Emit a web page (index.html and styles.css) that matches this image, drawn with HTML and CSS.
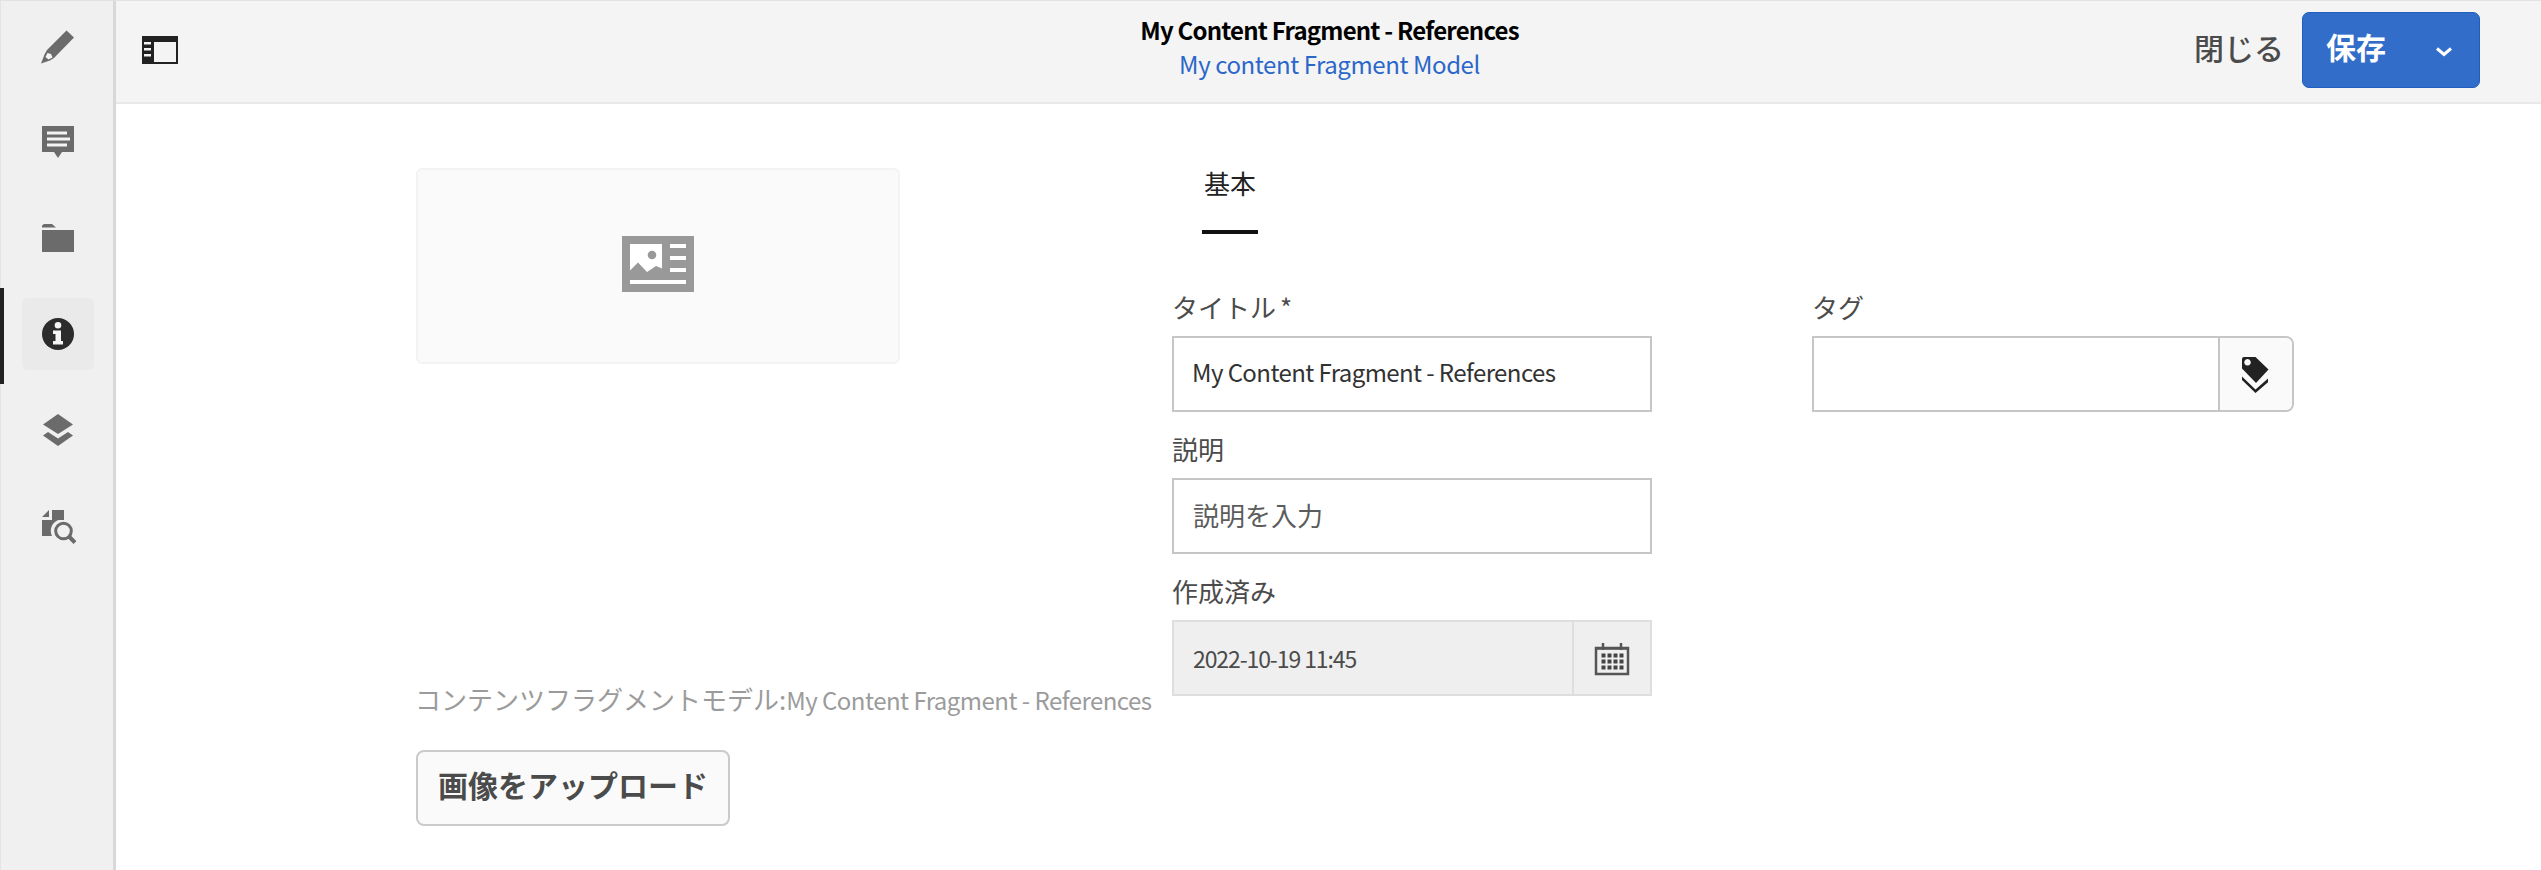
FILE: index.html
```html
<!DOCTYPE html>
<html lang="ja">
<head>
<meta charset="utf-8">
<title>My Content Fragment - References</title>
<link rel="stylesheet" href="styles.css">
</head>
<body>
<div class="app">
  <nav class="rail">
    <a class="rail-item"><svg width="36" height="36" viewBox="0 0 36 36"><path d="M26.5 1.500 34 8.500 14 29 10 31.500 1 34.500 4.500 25.500 7 21z"/><path class="cut" d="M7.500 24 11 25 12.500 28.500 8.500 30.500 5.500 28z"/></svg></a>
    <a class="rail-item"><svg width="36" height="36" viewBox="0 0 36 36"><path d="M2 2h32v26H22l-4 6-4-6H2z"/><path class="cut" d="M7 7.500h20v3H7zM7 13.500h23v3H7zM7 19.500h20v3H7z"/></svg></a>
    <a class="rail-item"><svg width="36" height="36" viewBox="0 0 36 36"><path d="M2 7.500V5.500L4 4h8l4 3.500zM2 10h32v22H2z"/></svg></a>
    <a class="rail-item active"><svg width="36" height="36" viewBox="0 0 36 36"><circle cx="18" cy="18" r="16"/><path class="cut" d="M13 14.500h8V25h2v3.500H13V25h2.500v-7H13z"/><circle class="cut" cx="18" cy="9.300" r="3.300"/></svg></a>
    <a class="rail-item"><svg width="36" height="36" viewBox="0 0 36 36"><path d="M18 2 33 12.500 18 22 3 12.500zM8 20l10 6.500L28 20l5 3.500L18 34 3 23.500z"/></svg></a>
    <a class="rail-item"><svg width="36" height="36" viewBox="0 0 36 36"><path d="M2 9 9 2v7zM12 2h12v10h-5.500A11.500 11.500 0 0 0 12 28H2V12h10z"/><circle class="lens" cx="23.500" cy="23" r="7.800"/><path class="handle" d="m29 28.500 6 6"/></svg></a>
  </nav>
  <div class="page">
    <header class="header">
      <svg class="panel-icon" width="36" height="28" viewBox="0 0 36 28"><path d="M0 0h36v28H0z"/><path class="hole" d="M12 6h22v20H12zM2 6h7v2.500H2zM2 12h7v2.500H2zM2 18h7v2.500H2z"/></svg>
      <div class="heading">
        <div class="title">My Content Fragment - References</div>
        <a class="model">My content Fragment Model</a>
      </div>
      <div class="actions">
        <span class="close">閉じる</span>
        <button class="save"><span>保存</span><svg width="18" height="12" viewBox="0 0 18 12"><path d="m2 2.500 7 6 7-6"/></svg></button>
      </div>
    </header>
    <main class="content">
      <section class="preview">
        <div class="thumb">
          <svg width="72" height="56" viewBox="0 0 72 56"><path class="gray" d="M0 0h72v56H0z"/><path class="light" d="M8 8h32v24.500L34 30l-9 6-9-9.500L8 34.500zM48 8h16v4H48zM48 20h16v4H48zM48 32h16v4H48zM8 44h56v4H8z"/><circle class="gray" cx="30" cy="19" r="4.300"/></svg>
        </div>
        <div class="caption">コンテンツフラグメントモデル:<span>My Content Fragment - References</span></div>
        <button class="upload">画像をアップロード</button>
      </section>
      <section class="form">
        <div class="tab">基本</div>
        <div class="columns">
          <div class="column">
            <label>タイトル<span class="star">*</span></label>
            <div class="field value">My Content Fragment - References</div>
            <label>説明</label>
            <div class="field hint">説明を入力</div>
            <label>作成済み</label>
            <div class="field disabled"><span class="date">2022-10-19 11:45</span>
              <div class="addon calendar"><svg width="36" height="34" viewBox="0 0 36 34"><path class="frame" d="M2 6h32v26H2z"/><path class="frame" d="M2 6.500h32M9 1v7M27 1v7"/><path class="dots" d="M7.500 13.500h22M7.500 19.500h22M7.500 25.500h22"/></svg></div>
            </div>
          </div>
          <div class="column">
            <label>タグ</label>
            <div class="field tags"><div class="addon"><svg width="28" height="37" viewBox="0 0 28 37"><path fill-rule="evenodd" d="M1 3q0-2 2-2h11.500L27.500 13.500 15 27 1 12.500zM6.500 3a3.300 3.300 0 1 0 .01 0z"/><path d="M1 20.500 14.500 33.500 27 22.500v3.800L14.500 37 1 24z"/></svg></div></div>
          </div>
        </div>
      </section>
    </main>
  </div>
</div>
</body>
</html>
```

FILE: styles.css
```css
* { box-sizing: border-box; }
body {
  margin: 0;
  background: #fff;
  color: #4b4b4b;
  font-family: "Noto Sans CJK JP", sans-serif;
  font-size: 26px;
  white-space: nowrap;
}
svg { display: block; flex: none; }
button { font-family: inherit; margin: 0; }
.app { display: flex; height: 870px; overflow: hidden; border-top: 1px solid #e2e2e2; }

.rail { width: 116px; flex: none; background: #f0f0f0; border-left: 1px solid #e4e4e4; border-right: 3px solid #d8d8d8; }
.rail-item { display: flex; align-items: center; justify-content: center; height: 96px; padding: 0 0 4px 2px; fill: #6b6b6b; }
.rail-item:first-child { height: 95px; }
.rail-item.active { margin-left: -1px; border-left: 4px solid #222; padding: 0 1px 4px 0; fill: #2c2c2c; }
.rail-item.active svg { width: 72px; height: 72px; padding: 18px; background: #eaeaea; border-radius: 6px; }
.cut { fill: #f4f4f4; }
.lens { fill: #f0f0f0; stroke: #6b6b6b; stroke-width: 3; }
.handle { fill: none; stroke: #6b6b6b; stroke-width: 4; }

.page { flex: 1; }
.header { display: grid; grid-template-columns: 1fr auto 1fr; height: 103px; background: #f4f4f4; border-bottom: 2px solid #e9e9e9; }
.panel-icon { margin: 35px 0 0 26px; fill: #222; }
.hole { fill: #f4f4f4; }
.heading { padding: 12px 0 0 2px; text-align: center; }
.title { font-size: 24px; line-height: 34px; font-weight: 700; letter-spacing: -0.8px; color: #000; }
.model { display: block; font-size: 24px; line-height: 34px; letter-spacing: -0.42px; color: #2b67c9; }
.actions { display: flex; justify-content: flex-end; padding: 11px 61px 0 0; }
.close { font-size: 30px; font-weight: 500; line-height: 71px; margin-right: 18px; }
.save { display: flex; align-items: center; justify-content: space-between; width: 178px; height: 76px; padding: 0 26px 8px 23px; border: 1px solid #1f5dbf; border-radius: 7px; background: #326ec9; color: #fff; font-size: 30px; font-weight: 700; }
.save svg { margin-top: 12px; fill: none; stroke: #fff; stroke-width: 3; }

.content { display: flex; padding-left: 300px; }
.preview { width: 756px; padding-top: 64px; display: flex; flex-direction: column; align-items: flex-start; }
.thumb { display: flex; align-items: center; justify-content: center; width: 484px; height: 196px; border: 2px solid #f3f3f3; border-radius: 6px; background: #fafafa; padding-bottom: 4px; }
.gray { fill: #999; }
.light { fill: #fff; }
.caption { margin: 315px 0 0 -1px; line-height: 40px; color: #9b9b9b; }
.caption span { font-size: 24px; letter-spacing: -0.52px; }
.upload { margin-top: 30px; width: 314px; height: 76px; padding: 0 0 8px; border: 2px solid #cacaca; border-radius: 8px; background: #fafafa; color: #4b4b4b; font-size: 30px; font-weight: 700; }
.form { padding-top: 60px; }
.tab { width: 56px; height: 70px; margin-left: 30px; line-height: 38px; text-align: center; color: #222; border-bottom: 4px solid #111; }
.columns { display: flex; gap: 160px; margin-top: 48px; }
.column { width: 480px; }
label { display: block; height: 54px; line-height: 50px; }
.star { margin-left: 4px; }
.field { display: flex; align-items: center; width: 480px; height: 76px; margin-bottom: 12px; padding: 0 0 4px 19px; border: 2px solid #c6c6c6; }
.value { padding-left: 18px; padding-bottom: 6px; color: #323232; font-size: 24px; letter-spacing: -0.58px; }
.hint { color: #5c5c5c; }
.disabled { padding: 0 0 0 19px; background: #efefef; border-color: #dedede; justify-content: space-between; font-size: 23px; }
.date { letter-spacing: -1.1px; }
.addon { display: flex; align-items: center; justify-content: center; align-self: stretch; width: 74px; border-left: 2px solid #c6c6c6; fill: #222; }
.calendar { width: 78px; padding-top: 2px; border-color: #dedede; }
.frame { fill: none; stroke: #555; stroke-width: 2.500; }
.dots { fill: none; stroke: #444; stroke-width: 4; stroke-dasharray: 4 2; }
.tags { width: 482px; padding: 0; justify-content: flex-end; border-radius: 0 8px 8px 0; }
.tags .addon { padding-right: 2px; background: #fafafa; border-radius: 0 6px 6px 0; }
```
